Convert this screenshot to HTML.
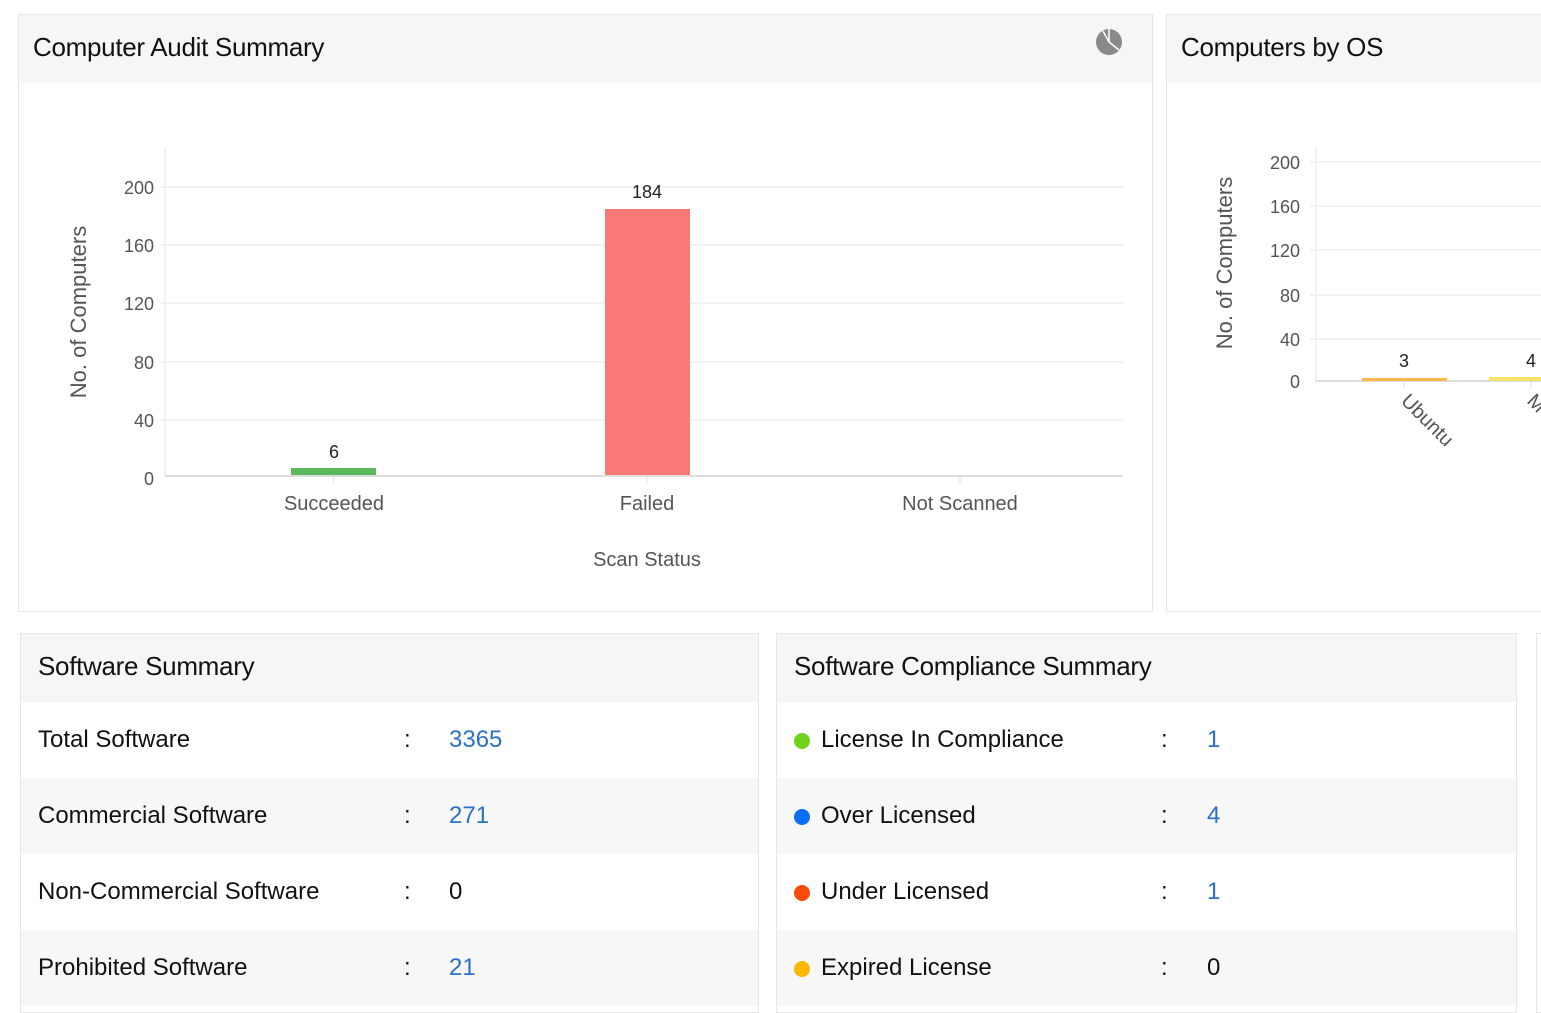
<!DOCTYPE html>
<html><head><meta charset="utf-8"><style>
*{margin:0;padding:0;box-sizing:border-box}
body{width:1541px;height:1000px;overflow:hidden;background:#fff;font-family:"Liberation Sans",sans-serif;position:relative}
.p{position:absolute;border:1px solid #e6e6e6;background:#fff}
.h{height:68px;background:#f6f6f6;font-size:26px;color:#111;padding:17px 0 0 14px;letter-spacing:-0.3px;white-space:nowrap}
.r{height:76px;font-size:24px;color:#111;position:relative;white-space:nowrap}
.r.g{background:#f7f7f7}
.r span{position:absolute;top:24px}
.b{color:#2a72c8}
.dot{display:inline-block;width:16px;height:16px;border-radius:50%;position:absolute;top:31px;left:17px}
svg text{font-family:"Liberation Sans",sans-serif}
</style></head><body>
<div class="p" style="left:18px;top:14px;width:1135px;height:598px"><div class="h">Computer Audit Summary</div></div>
<div class="p" style="left:1166px;top:14px;width:400px;height:598px"><div class="h">Computers by OS</div></div>

<div class="p" style="left:20px;top:633px;width:739px;height:380px"><div class="h" style="padding-left:17px">Software Summary</div>
<div class="r"><span style="left:17px">Total Software</span><span style="left:383px">:</span><span class="b" style="left:428px">3365</span></div>
<div class="r g"><span style="left:17px">Commercial Software</span><span style="left:383px">:</span><span class="b" style="left:428px">271</span></div>
<div class="r"><span style="left:17px">Non-Commercial Software</span><span style="left:383px">:</span><span style="left:428px">0</span></div>
<div class="r g"><span style="left:17px">Prohibited Software</span><span style="left:383px">:</span><span class="b" style="left:428px">21</span></div>
</div>
<div class="p" style="left:776px;top:633px;width:741px;height:380px"><div class="h" style="padding-left:17px">Software Compliance Summary</div>
<div class="r"><i class="dot" style="background:#6fd31c"></i><span style="left:44px">License In Compliance</span><span style="left:384px">:</span><span class="b" style="left:430px">1</span></div>
<div class="r g"><i class="dot" style="background:#0a6ff5"></i><span style="left:44px">Over Licensed</span><span style="left:384px">:</span><span class="b" style="left:430px">4</span></div>
<div class="r"><i class="dot" style="background:#fb4b0b"></i><span style="left:44px">Under Licensed</span><span style="left:384px">:</span><span class="b" style="left:430px">1</span></div>
<div class="r g"><i class="dot" style="background:#fdb902"></i><span style="left:44px">Expired License</span><span style="left:384px">:</span><span style="left:430px">0</span></div>
</div>
<div class="p" style="left:1536px;top:633px;width:20px;height:380px"></div>

<svg width="1541" height="1000" style="position:absolute;left:0;top:0">
<g stroke="#eeeeee" stroke-width="1.5">
<line x1="160" y1="187" x2="1123" y2="187"/><line x1="160" y1="245" x2="1123" y2="245"/><line x1="160" y1="303" x2="1123" y2="303"/><line x1="160" y1="362" x2="1123" y2="362"/><line x1="160" y1="420" x2="1123" y2="420"/>
<line x1="165" y1="147" x2="165" y2="477"/>
<line x1="1310" y1="162" x2="1541" y2="162"/><line x1="1310" y1="206" x2="1541" y2="206"/><line x1="1310" y1="250" x2="1541" y2="250"/><line x1="1310" y1="295" x2="1541" y2="295"/><line x1="1310" y1="339" x2="1541" y2="339"/>
<line x1="1316" y1="147" x2="1316" y2="382"/>
</g>
<g stroke="#dddddd" stroke-width="2"><line x1="165" y1="476" x2="1123" y2="476"/><line x1="1316" y1="381" x2="1541" y2="381"/></g>
<g stroke="#dddddd"><line x1="334" y1="476" x2="334" y2="483"/><line x1="647" y1="476" x2="647" y2="483"/><line x1="960" y1="476" x2="960" y2="483"/><line x1="1404" y1="381" x2="1404" y2="388"/><line x1="1531" y1="381" x2="1531" y2="388"/></g>
<rect x="291" y="468" width="85" height="7" fill="#5cb85c"/>
<rect x="605" y="209" width="85" height="266" fill="#fa7876"/>
<rect x="1362" y="378" width="85" height="3" fill="#f8b64c"/>
<rect x="1489" y="377" width="60" height="4" fill="#f5e46a"/>
<g font-size="18" fill="#555" text-anchor="end">
<text x="154" y="194">200</text><text x="154" y="252">160</text><text x="154" y="310">120</text><text x="154" y="369">80</text><text x="154" y="427">40</text><text x="154" y="485">0</text>
<text x="1300" y="169">200</text><text x="1300" y="213">160</text><text x="1300" y="257">120</text><text x="1300" y="302">80</text><text x="1300" y="346">40</text><text x="1300" y="388">0</text>
</g>
<g font-size="18" fill="#222" text-anchor="middle"><text x="334" y="458">6</text><text x="647" y="198">184</text><text x="1404" y="367">3</text><text x="1531" y="367">4</text></g>
<g font-size="20" fill="#555" text-anchor="middle"><text x="334" y="510">Succeeded</text><text x="647" y="510">Failed</text><text x="960" y="510">Not Scanned</text><text x="647" y="566">Scan Status</text></g>
<text x="86" y="312" font-size="22" fill="#555" text-anchor="middle" transform="rotate(-90 86 312)">No. of Computers</text>
<text x="1232" y="263" font-size="22" fill="#555" text-anchor="middle" transform="rotate(-90 1232 263)">No. of Computers</text>
<text x="1400" y="402" font-size="20" fill="#555" transform="rotate(45 1400 402)">Ubuntu</text>
<text x="1526" y="402" font-size="20" fill="#555" transform="rotate(45 1526 402)">M</text>
<circle cx="1109" cy="42" r="13" fill="#8a8a8a"/>
<path d="M1109 42 L1109 29 M1109 42 L1119 50 M1109 42 L1103 31" stroke="#fff" stroke-width="1.5"/>
</svg>
</body></html>
